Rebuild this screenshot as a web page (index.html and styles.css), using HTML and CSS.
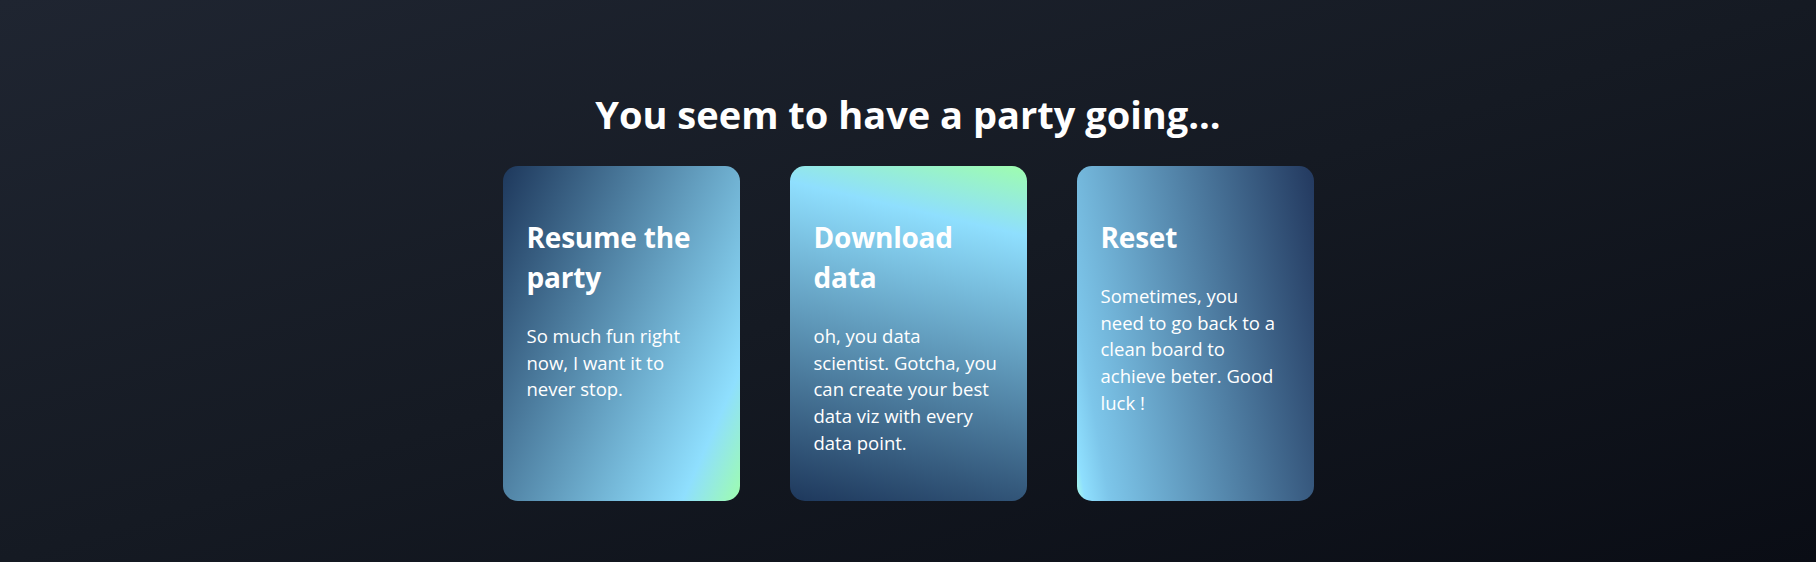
FILE: index.html
```html
<!DOCTYPE html>
<html lang="en">
<head>
<meta charset="utf-8">
<title>Party</title>
<link rel="stylesheet" href="styles.css">
</head>
<body>
<main class="screen">
  <h1 class="title">You seem to have a party going...</h1>
  <div class="cards">
    <div class="card card-resume">
      <h2 class="card-title">Resume the party</h2>
      <p class="card-text">So much fun right<br>now, I want it to<br>never stop.</p>
    </div>
    <div class="card card-download">
      <h2 class="card-title">Download data</h2>
      <p class="card-text">oh, you data<br>scientist. Gotcha, you<br>can create your best<br>data viz with every<br>data point.</p>
    </div>
    <div class="card card-reset">
      <h2 class="card-title">Reset</h2>
      <p class="card-text">Sometimes, you<br>need to go back to a<br>clean board to<br>achieve beter. Good<br>luck !</p>
    </div>
  </div>
</main>
</body>
</html>
```
FILE: styles.css
```css
html, body {
  margin: 0;
  height: 100%;
}

body {
  background: linear-gradient(to bottom right, #1f2531 0%, #151a23 50%, #0a0d15 100%);
  font-family: "Open Sans", "Noto Sans", sans-serif;
  color: #ffffff;
}

.screen {
  display: flex;
  flex-direction: column;
  align-items: center;
  padding-top: 90px;
}

.title {
  margin: 0;
  font-size: 38px;
  line-height: 48px;
  font-weight: 700;
}

.cards {
  display: flex;
  gap: 50px;
  margin-top: 28px;
}

.card {
  width: 237px;
  height: 335px;
  box-sizing: border-box;
  padding: 24px;
  border-radius: 15px;
}

.card-title {
  margin: 27px 0 26px;
  font-size: 28px;
  line-height: 40px;
  font-weight: 700;
  letter-spacing: -0.2px;
}

.card-text {
  margin: 0;
  font-size: 18.5px;
  line-height: 26.67px;
  white-space: nowrap;
}

.card-resume {
  background: linear-gradient(114deg, #1e385c 0%, #8fdffe 85%, #9efdae 100%);
}

.card-download {
  background: linear-gradient(193deg, #9efdae 0%, #8fdffe 18%, #1e385c 100%);
}

.card-reset {
  background: linear-gradient(80deg, #a9fbe6 0%, #8fdffe 3%, #7dc6ea 11%, #23395f 100%);
}
```
